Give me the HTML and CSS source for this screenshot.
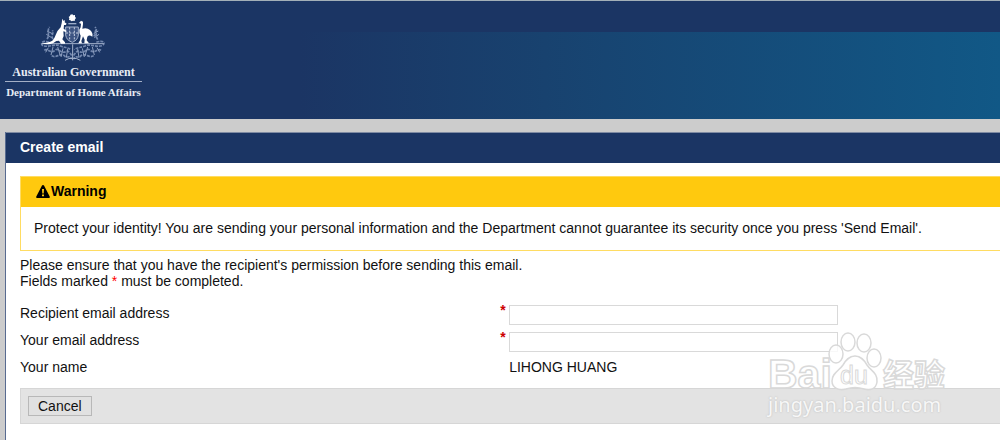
FILE: index.html
```html
<!DOCTYPE html>
<html lang="en">
<head>
    <meta charset="UTF-8">
    <meta name="viewport" content="width=device-width, initial-scale=1.0">
    <title>Create email</title>
    <link rel="stylesheet" href="styles.css">
</head>
<body>
    <header class="banner">
        <div class="logo">
            <svg class="crest" viewBox="0 0 210 150" aria-hidden="true">
                <!-- Wattle branches and scroll -->
                <g fill="none" stroke="#7287ae" stroke-width="5" stroke-dasharray="9 3">
                    <path d="M30 88 C10 80 2 92 12 98 C30 104 45 92 62 98 C74 104 84 102 95 110"/>
                    <path d="M172 88 C192 80 202 90 190 98 C172 104 156 92 140 98 C126 104 116 102 106 110"/>
                    <path d="M16 112 C26 104 36 124 48 112 C58 102 66 124 80 116 C88 110 94 122 100 130"/>
                    <path d="M186 112 C176 104 166 124 154 112 C144 102 136 124 122 116 C114 110 108 122 102 130"/>
                    <path d="M38 128 C52 138 64 116 78 130 C84 136 92 126 98 138"/>
                    <path d="M164 128 C150 138 138 116 124 130 C118 136 110 126 104 138"/>
                    <path d="M24 78 C34 66 22 54 32 42 M42 78 C34 66 46 62 40 52"/>
                    <path d="M176 80 C166 64 178 54 168 42 M164 70 C174 62 164 58 172 50"/>
                </g>
                <g fill="none" stroke="#8fa0c0" stroke-width="3">
                    <path d="M28 104 L20 118 M42 102 L36 126 M56 102 L64 128 M72 106 L66 132 M86 108 L82 134"/>
                    <path d="M174 104 L182 118 M160 102 L166 126 M146 102 L138 128 M130 106 L136 132 M116 108 L120 134"/>
                    <path d="M22 64 L38 74 M24 54 L40 62 M180 64 L166 74 M178 54 L164 62"/>
                </g>
                <path d="M8 92 H194 M101 94 V142 M78 142 Q90 134 101 136 Q112 134 124 142" fill="none" stroke="#a5b3cd" stroke-width="3"/>
                <!-- Shield -->
                <path d="M80 42 H118 V66 Q116 82 100 88 Q82 82 80 66 Z" fill="#3d5482" stroke="#a5b3cd" stroke-width="3"/>
                <path d="M92 43 V84 M106 43 V84 M81 60 H117" fill="none" stroke="#c8d1e2" stroke-width="3" stroke-dasharray="6 4"/>
                <path d="M88 32 H112" stroke="#9dadca" stroke-width="4"/>
                <!-- Commonwealth star -->
                <path d="M100 4 L103 7 L108 6 L108 11 L111 15 L108 19 L107 24 L102 23 L98 25 L94 22 L90 21 L91 16 L89 12 L93 9 L94 5 Z" fill="#fff"/>
                <!-- Kangaroo -->
                <path d="M70 17 L74 24 L78 21 L77 28 L83 32 L80 36 L75 36 L74 47 L83 54 L81 57 L73 55 L74 69 L70 79 L78 88 L78 92 L66 92 L60 83 L52 84 L42 91 Q26 97 8 90 Q28 90 40 83 Q46 78 50 66 Q55 52 65 43 L68 31 Z" fill="#fff"/>
                <!-- Emu -->
                <path d="M120 30 L126 23 L132 26 L132 34 L130 47 Q144 43 153 51 Q163 60 160 71 Q151 64 145 71 L143 82 L150 91 L136 91 L137 80 L132 70 L127 84 L129 91 L118 91 L123 82 L125 68 Q120 60 121 50 L125 43 L126 32 Z" fill="#fff"/>
            </svg>
            <span class="logo-government">Australian Government</span>
            <span class="logo-department">Department of Home Affairs</span>
        </div>
        <div class="banner-fade"></div>
    </header>

    <main class="panel">
        <h1 class="panel-title">Create email</h1>
        <form class="panel-content">
            <section class="warning">
                <h2 class="warning-title">
                    <svg class="warning-icon" viewBox="0 0 14 13" aria-hidden="true">
                        <path d="M7 0 Q7.700 0 8 .6 L13.700 11.400 Q14.300 12.900 12.900 13 H1.100 Q-.300 12.900 .3 11.400 L6 .6 Q6.300 0 7 0 Z" fill="#000"/>
                        <path d="M6 4 H8 L7.700 8.500 H6.300 Z M6 9.500 H8 V11.300 H6 Z" fill="#ffc90e"/>
                    </svg>Warning
                </h2>
                <p class="warning-text">Protect your identity! You are sending your personal information and the Department cannot guarantee its security once you press 'Send Email'.</p>
            </section>

            <p class="instructions">
                Please ensure that you have the recipient's permission before sending this email.<br>
                Fields marked <span class="marker">*</span> must be completed.
            </p>

            <div class="form-row">
                <label for="recipient">Recipient email address</label>
                <span class="required">*</span>
                <input type="email" id="recipient" name="recipient" required>
            </div>
            <div class="form-row">
                <label for="sender">Your email address</label>
                <span class="required">*</span>
                <input type="email" id="sender" name="sender" required>
            </div>
            <div class="form-row">
                <span>Your name</span>
                <span></span>
                <span>LIHONG HUANG</span>
            </div>

            <div class="button-bar">
                <button type="button">Cancel</button>
            </div>
        </form>
    </main>

    <!-- Watermark -->
    <div class="watermark">
        <svg class="watermark-logo" viewBox="0 0 180 60" role="img" aria-label="Baidu">
            <g fill="#fff" fill-opacity="0.8" stroke="#d9d9d9" stroke-width="1.500">
                <text class="mark-latin" x="0" y="56">Bai</text>
                <ellipse cx="68" cy="22" rx="7" ry="9"/>
                <ellipse cx="80" cy="10" rx="7" ry="9"/>
                <ellipse cx="96" cy="11" rx="7" ry="9"/>
                <ellipse cx="106" cy="26" rx="7" ry="9"/>
                <path d="M87 24 C93 24 96 28 99 33 C103 39 110 41 109 50 C108 57 102 59 96 57 C90 55 84 55 78 57 C71 59 64 56 64 49 C64 41 71 39 75 33 C78 28 81 24 87 24 Z"/>
                <text class="mark-du" x="72" y="52">du</text>
                <text class="mark-chinese" x="115" y="54">经验</text>
            </g>
        </svg>
        <span class="watermark-url">jingyan.baidu.com</span>
    </div>
</body>
</html>
```

FILE: styles.css
```css
/* General Styles */
* {
    box-sizing: border-box;
}

body {
    margin: 0;
    min-height: 100vh;
    display: flex;
    flex-direction: column;
    overflow-x: hidden;
    background-color: #cccccc;
    color: #111111;
    font-family: "Liberation Sans", Arial, sans-serif;
    font-size: 14px;
    line-height: 16px;
}

h1, h2, p {
    margin: 0;
}

/* Banner */
.banner {
    display: flex;
    align-items: stretch;
    height: 119px;
    border-top: 1px solid #a3b0b8;
    background-color: #1b3564;
}

.logo {
    display: flex;
    flex-direction: column;
    align-items: center;
    width: 30%;
    max-width: 137px;
    margin-left: 5px;
    padding-top: 12px;
    color: #e8ecf4;
    font-family: "Liberation Serif", "Times New Roman", serif;
    font-weight: bold;
    white-space: nowrap;
}

.crest {
    width: 70px;
    height: 50px;
}

.logo-government {
    font-size: 12px;
    line-height: 18px;
}

.logo-department {
    width: 100%;
    padding-top: 2px;
    border-top: 1px solid #a4afc6;
    font-size: 11px;
    line-height: 16px;
    text-align: center;
}

.banner-fade {
    flex: 1;
    margin: 31px 0 0 158px;
    background: linear-gradient(to right, #1b3564, #18426f 35%, #115886);
}

/* Panel */
.panel {
    flex: 1;
    margin: 13px 0 0 5px;
    border-left: 1px solid #586b90;
    background-color: #ffffff;
}

.panel-title {
    padding: 6px 14px 8px;
    border-top: 1px solid #7f8ba3;
    background-color: #1b3564;
    color: #ffffff;
    font-size: 14px;
    line-height: 16px;
}

.panel-content {
    padding: 13px 0 16px 14px;
}

/* Warning box */
.warning {
    border: 1px solid #ffdc62;
    border-right: none;
}

.warning-title {
    display: flex;
    align-items: center;
    gap: 1px;
    padding: 6px 15px 8px;
    background-color: #ffc90e;
    color: #000000;
    font-size: 14px;
    line-height: 16px;
}

.warning-icon {
    width: 14px;
    height: 13px;
}

.warning-text {
    padding: 13px 13px 14px;
}

.instructions {
    margin: 6px 0 12px;
}

.marker {
    color: #ff0000;
}

/* Form rows */
.form-row {
    display: grid;
    grid-template-columns: 49% 9px 1fr;
    height: 27px;
    padding-top: 4px;
}

.required {
    color: #cc0000;
    font-weight: bold;
    line-height: 10px;
}

.form-row input {
    width: 67%;
    height: 20px;
    padding: 1px 4px;
    border: 1px solid #d9d9d9;
    background-color: #ffffff;
    font: inherit;
}

/* Buttons */
.button-bar {
    margin-top: 6px;
    padding: 7px;
    border: 1px solid #d6d6d6;
    border-right: none;
    background-color: #e3e3e3;
}

.button-bar button {
    display: block;
    height: 20px;
    padding: 0 9px;
    border: 1px solid #b8b8b8;
    background-color: #e1e1e1;
    color: #111111;
    font: inherit;
    line-height: 18px;
}

/* Watermark */
.watermark {
    position: absolute;
    top: 332px;
    right: 52px;
    width: 180px;
    pointer-events: none;
}

.watermark-logo {
    display: block;
    width: 180px;
    height: 60px;
    overflow: visible;
}

.mark-latin {
    font: bold 41px "Liberation Sans", Arial, sans-serif;
}

.mark-du {
    font: 25px "Liberation Sans", Arial, sans-serif;
    stroke-width: 1px;
}

.mark-chinese {
    font: bold 31px "Noto Sans CJK SC", sans-serif;
}

.watermark-url {
    display: block;
    color: #f7f7f7;
    font-family: "Noto Sans", sans-serif;
    font-size: 20px;
    line-height: 26px;
    text-shadow: 0 0 2px #b8b8b8;
}
```
